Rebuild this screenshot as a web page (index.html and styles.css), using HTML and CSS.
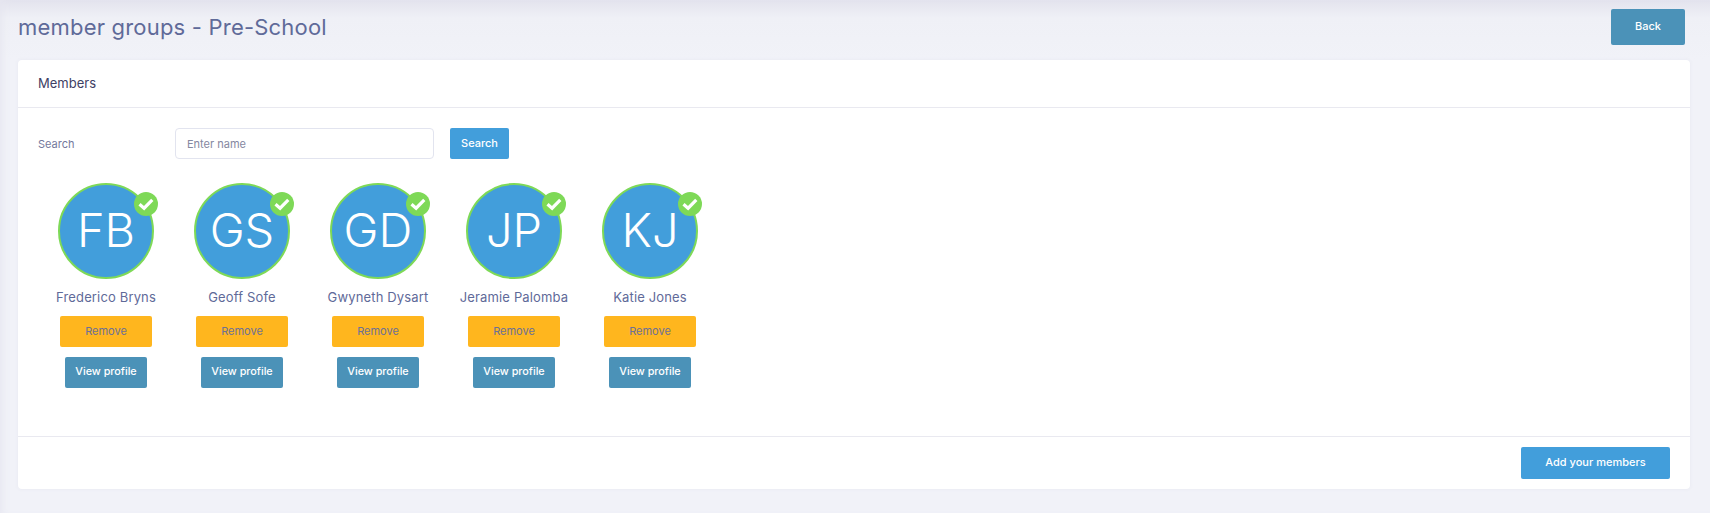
FILE: index.html
```html
<!DOCTYPE html>
<html lang="en">
<head>
<meta charset="UTF-8">
<title>member groups - Pre-School</title>
<link rel="stylesheet" href="styles.css">
</head>
<body>
<div class="top">
  <h1>member groups - Pre-School</h1>
  <button class="btn btn-teal btn-back">Back</button>
</div>

<div class="card">
  <div class="card-head">Members</div>
  <div class="card-body">
    <div class="search">
      <label class="search-label">Search</label>
      <input class="search-input" type="text" placeholder="Enter name">
      <button class="btn btn-blue btn-search">Search</button>
    </div>

    <div class="members">
      <div class="member">
        <div class="avatar">FB
          <svg class="tick" viewBox="0 0 24 24"><circle cx="12" cy="12" r="12" fill="#7ed957"/><path d="M5.5 12.2l4.6 4 8.2-8.4" fill="none" stroke="#fff" stroke-width="3.2"/></svg>
        </div>
        <div class="name">Frederico Bryns</div>
        <button class="btn btn-orange">Remove</button>
        <button class="btn btn-teal btn-view">View profile</button>
      </div>
      <div class="member">
        <div class="avatar">GS
          <svg class="tick" viewBox="0 0 24 24"><circle cx="12" cy="12" r="12" fill="#7ed957"/><path d="M5.5 12.2l4.6 4 8.2-8.4" fill="none" stroke="#fff" stroke-width="3.2"/></svg>
        </div>
        <div class="name">Geoff Sofe</div>
        <button class="btn btn-orange">Remove</button>
        <button class="btn btn-teal btn-view">View profile</button>
      </div>
      <div class="member">
        <div class="avatar">GD
          <svg class="tick" viewBox="0 0 24 24"><circle cx="12" cy="12" r="12" fill="#7ed957"/><path d="M5.5 12.2l4.6 4 8.2-8.4" fill="none" stroke="#fff" stroke-width="3.2"/></svg>
        </div>
        <div class="name">Gwyneth Dysart</div>
        <button class="btn btn-orange">Remove</button>
        <button class="btn btn-teal btn-view">View profile</button>
      </div>
      <div class="member">
        <div class="avatar">JP
          <svg class="tick" viewBox="0 0 24 24"><circle cx="12" cy="12" r="12" fill="#7ed957"/><path d="M5.5 12.2l4.6 4 8.2-8.4" fill="none" stroke="#fff" stroke-width="3.2"/></svg>
        </div>
        <div class="name">Jeramie Palomba</div>
        <button class="btn btn-orange">Remove</button>
        <button class="btn btn-teal btn-view">View profile</button>
      </div>
      <div class="member">
        <div class="avatar">KJ
          <svg class="tick" viewBox="0 0 24 24"><circle cx="12" cy="12" r="12" fill="#7ed957"/><path d="M5.5 12.2l4.6 4 8.2-8.4" fill="none" stroke="#fff" stroke-width="3.2"/></svg>
        </div>
        <div class="name">Katie Jones</div>
        <button class="btn btn-orange">Remove</button>
        <button class="btn btn-teal btn-view">View profile</button>
      </div>
    </div>
  </div>
  <div class="card-foot">
    <button class="btn btn-blue btn-add">Add your members</button>
  </div>
</div>
</body>
</html>
```

FILE: styles.css
```css
html { height:100%; }
body { margin:0; height:513px; overflow:hidden; box-sizing:border-box; padding:9px 25px 0 18px; font-family:'Inter', 'Noto Sans', sans-serif; background:linear-gradient(#e3e3ed 0, #eff0f6 18px, #f1f2f8 60px); color:#5d6494; box-shadow:inset 8px 0 8px -6px #e6e6f0; }

.top { display:flex; justify-content:space-between; align-items:flex-start; height:51px; }
h1 { margin:4px 0 0; font-size:22px; line-height:28px; font-weight:400; color:#5f6a99; letter-spacing:0.2px; }

.btn { font-family:inherit; border:none; border-radius:2px; font-size:11px; font-weight:500; padding:0 0 2px; cursor:pointer; }
.btn-teal { background:#4b92b8; color:#fff; }
.btn-blue { background:#429edb; color:#fff; }
.btn-orange { background:#ffb61e; color:#6c7096; font-weight:400; width:92px; height:31px; }
.btn-back { width:74px; height:36px; }

.card { margin-right:-5px; background:#fff; border-radius:4px; box-shadow:0 0 4px rgba(90,90,140,.06); height:429px; display:flex; flex-direction:column; }
.card-head { height:47px; line-height:46px; padding-left:20px; font-size:13px; color:#3e4064; border-bottom:1px solid #e9e9f0; flex:none; }
.card-body { flex:1; padding:20px 20px 0; }

.search { display:flex; align-items:center; height:31px; }
.search-label { width:137px; font-size:11px; color:#74789c; }
.search-input { box-sizing:border-box; width:259px; height:31px; padding:0 11px; border:1px solid #e2e4ef; border-radius:4px; font-family:inherit; font-size:11px; outline:none; }
.search-input::placeholder { color:#85889f; opacity:1; }
.btn-search { width:59px; height:31px; margin-left:16px; }

.members { display:flex; margin-top:24px; }
.member { width:136px; display:flex; flex-direction:column; align-items:center; }
.avatar { position:relative; box-sizing:border-box; width:96px; height:96px; border:2px solid #7ed957; border-radius:50%; background:#429edb; color:#fff; font-size:47px; font-weight:300; line-height:90px; text-align:center; }
.tick { position:absolute; top:7px; right:-6px; width:24px; height:24px; }
.name { margin-top:9px; height:28px; line-height:18px; font-size:13px; color:#5f6a99; white-space:nowrap; letter-spacing:0.15px; }
.btn-view { width:82px; height:31px; margin-top:10px; font-size:10.8px; }

.card-foot { flex:none; box-sizing:border-box; height:53px; border-top:1px solid #e9e9f0; display:flex; justify-content:flex-end; align-items:flex-start; padding:10px 20px 0 0; }
.btn-add { width:149px; height:32px; }
```
